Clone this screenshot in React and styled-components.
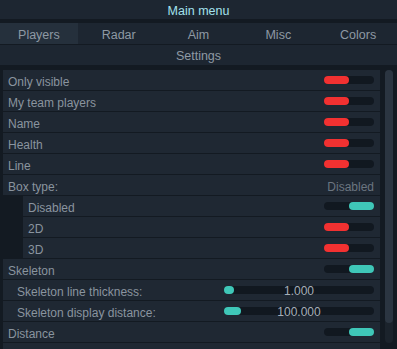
import React from "react";
import styled, { createGlobalStyle } from "styled-components";

const Global = createGlobalStyle`
  html, body { margin: 0; padding: 0; background: #131a22; }
  body { font-family: "Liberation Sans", Arial, sans-serif; font-size: 12px; }
`;

const Window = styled.div`
  width: 397px;
  height: 349px;
  overflow: hidden;
  display: flex;
  flex-direction: column;
  background: #131a22;
`;

const Text = styled.span`
  padding-top: ${(p) => p.$shift || 3}px;
`;

const TitleBar = styled.div`
  flex-shrink: 0;
  height: 19px;
  background: #1d2631;
  color: #a3e2ee;
  font-size: 12.5px;
  display: flex;
  align-items: center;
  justify-content: center;
`;

const TabBar = styled.div`
  flex-shrink: 0;
  margin-top: 4px;
  height: 21px;
  display: grid;
  grid-template-columns: repeat(5, 1fr);
  column-gap: 2px;
  background: #1d2631;
`;

const Tab = styled.div`
  display: flex;
  align-items: center;
  justify-content: center;
  font-size: 12.5px;
  color: #8e99a4;
  background: ${(p) => (p.$active ? "#25303c" : "#1d2631")};
`;

const SubHeader = styled.div`
  flex-shrink: 0;
  margin-top: 1px;
  height: 20px;
  background: #1d2631;
  color: #8e99a4;
  font-size: 12.5px;
  display: flex;
  align-items: center;
  justify-content: center;
`;

const Content = styled.div`
  margin-top: 5px;
  flex: 1;
  display: flex;
  align-items: flex-start;
  padding-left: 3px;
  min-height: 0;
`;

const List = styled.div`
  flex: 1;
  display: flex;
  flex-direction: column;
  gap: 1px;
`;

const Row = styled.div`
  flex-shrink: 0;
  height: 20px;
  margin-left: ${(p) => (p.$nested ? "20px" : "0")};
  padding: 0 6px 0 ${(p) => (p.$sub ? "14px" : "5px")};
  background: #1f2833;
  display: flex;
  align-items: center;
  justify-content: space-between;
  color: #8a949f;
`;

const Value = styled(Text)`
  color: #6b7580;
`;

const Track = styled.div`
  width: 50px;
  height: 8px;
  border-radius: 4px;
  background: #111820;
  display: flex;
  justify-content: ${(p) => (p.$on ? "flex-end" : "flex-start")};
`;

const Knob = styled.div`
  width: 25px;
  height: 8px;
  border-radius: 4px;
  background: ${(p) => (p.$on ? "#3fc7b8" : "#f23131")};
`;

const SliderTrack = styled.div`
  position: relative;
  width: 150px;
  height: 8px;
  border-radius: 4px;
  background: #111820;
`;

const SliderFill = styled.div`
  height: 8px;
  border-radius: 4px;
  background: #3fc7b8;
`;

const SliderValue = styled.span`
  position: absolute;
  left: 0;
  right: 0;
  top: 50%;
  transform: translateY(-45%);
  text-align: center;
  color: #a6afb9;
  font-size: 12px;
  line-height: 12px;
`;

const Scrollbar = styled.div`
  margin-left: 5px;
  margin-right: 4px;
  width: 8px;
  height: 273px;
  border-radius: 4px;
  background: #1b232c;
  display: flex;
  flex-direction: column;
`;

const Thumb = styled.div`
  height: 253px;
  border-radius: 4px;
  background: #2b3541;
`;

const Toggle = ({ on }) => (
  <Track $on={on}>
    <Knob $on={on} />
  </Track>
);

const Slider = ({ fill, value }) => (
  <SliderTrack>
    <SliderFill style={{ width: fill }} />
    <SliderValue>{value}</SliderValue>
  </SliderTrack>
);

const tabs = ["Players", "Radar", "Aim", "Misc", "Colors"];

const rows = [
  { label: "Only visible", kind: "toggle", on: false },
  { label: "My team players", kind: "toggle", on: false },
  { label: "Name", kind: "toggle", on: false },
  { label: "Health", kind: "toggle", on: false },
  { label: "Line", kind: "toggle", on: false },
  { label: "Box type:", kind: "value", value: "Disabled" },
  { label: "Disabled", kind: "toggle", on: true, nested: true },
  { label: "2D", kind: "toggle", on: false, nested: true },
  { label: "3D", kind: "toggle", on: false, nested: true },
  { label: "Skeleton", kind: "toggle", on: true },
  { label: "Skeleton line thickness:", kind: "slider", fill: 10, value: "1.000", sub: true },
  { label: "Skeleton display distance:", kind: "slider", fill: 17, value: "100.000", sub: true },
  { label: "Distance", kind: "toggle", on: true },
  { label: "", kind: "empty" },
];

export default function App() {
  return (
    <>
      <Global />
      <Window>
        <TitleBar>
          <Text $shift={2}>Main menu</Text>
        </TitleBar>
        <TabBar>
          {tabs.map((t, i) => (
            <Tab key={t} $active={i === 0}>
              <Text $shift={3}>{t}</Text>
            </Tab>
          ))}
        </TabBar>
        <SubHeader>
          <Text $shift={2}>Settings</Text>
        </SubHeader>
        <Content>
          <List>
            {rows.map((r, i) => (
              <Row key={i} $nested={r.nested} $sub={r.sub}>
                <Text>{r.label}</Text>
                {r.kind === "toggle" && <Toggle on={r.on} />}
                {r.kind === "value" && <Value>{r.value}</Value>}
                {r.kind === "slider" && <Slider fill={r.fill} value={r.value} />}
              </Row>
            ))}
          </List>
          <Scrollbar>
            <Thumb />
          </Scrollbar>
        </Content>
      </Window>
    </>
  );
}
